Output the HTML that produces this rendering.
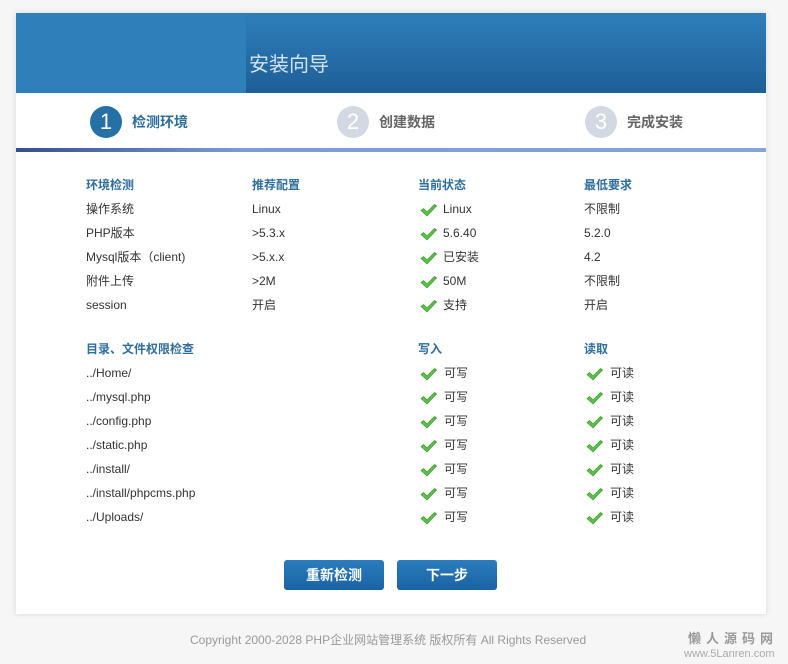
<!DOCTYPE html>
<html><head><meta charset="utf-8"><style>
*{margin:0;padding:0;box-sizing:border-box}
body{width:788px;height:664px;background:#f6f6f6;font-family:"Liberation Sans","Noto Sans CJK SC",sans-serif;position:relative;overflow:hidden}
.panel{position:absolute;left:16px;top:13px;width:750px;height:601px;background:#fff;box-shadow:0 0 6px rgba(0,0,0,.12)}
.hdr{position:absolute;left:0;top:0;width:750px;height:80px;background:linear-gradient(#2f7ebb,#1e5f97)}
.hdrl{position:absolute;left:0;top:0;width:230px;height:80px;background:#2f7fba}
.title{position:absolute;left:233px;top:35px;font-size:20px;color:#d4e4f2}
.step{position:absolute;top:94px;height:30px;display:flex;align-items:center}
.num{width:32px;height:32px;border-radius:50%;color:#fff;font-size:22px;text-align:center;line-height:32px;margin-right:10px}
.step span{font-size:14px;font-weight:bold}
.bar{position:absolute;left:0;top:135px;width:750px;height:4px;background:linear-gradient(90deg,#354f8e,#7d9ad8 30%,#86a3dc)}
.t{position:absolute;font-size:12px;color:#333;line-height:14px}
.h{color:#2e6e9e;font-weight:bold}
.ck{position:absolute;width:17px;height:14px}
.btn{position:absolute;top:547px;width:100px;height:30px;border-radius:3px;background:linear-gradient(#2a7dbd,#1a62a3);color:#fff;font-size:14px;font-weight:bold;text-align:center;line-height:30px}
.foot{position:absolute;left:190px;top:631px;font-size:12px;color:#999}
</style></head><body>
<div class="panel">
<div class="hdr"></div><div class="hdrl"></div>
<div class="title">安装向导</div>
<div class="step" style="left:74px"><div class="num" style="background:#2570a6">1</div><span style="color:#2a6c9c">检测环境</span></div>
<div class="step" style="left:321px"><div class="num" style="background:#d3d9e2">2</div><span style="color:#666">创建数据</span></div>
<div class="step" style="left:569px"><div class="num" style="background:#d3d9e2">3</div><span style="color:#666">完成安装</span></div>
<div class="bar"></div>
<div class="btn" style="left:268px">重新检测</div>
<div class="btn" style="left:381px">下一步</div>
</div>
<div class="foot">Copyright 2000-2028 PHP企业网站管理系统 版权所有 All Rights Reserved</div>
<div style="position:absolute;left:688px;top:628px;font-size:13px;color:#999;font-weight:bold;letter-spacing:5px">懒人源码网</div>
<div style="position:absolute;left:684px;top:648px;font-size:11px;color:#aaa">www.5Lanren.com</div>

<div class="t h" style="left:86px;top:178px">环境检测</div>
<div class="t h" style="left:252px;top:178px">推荐配置</div>
<div class="t h" style="left:418px;top:178px">当前状态</div>
<div class="t h" style="left:584px;top:178px">最低要求</div>

<div class="t" style="left:86px;top:202px">操作系统</div><div class="t" style="left:252px;top:202px">Linux</div><div class="t" style="left:443px;top:202px">Linux</div><div class="t" style="left:584px;top:202px">不限制</div>
<div class="t" style="left:86px;top:226px">PHP版本</div><div class="t" style="left:252px;top:226px">&gt;5.3.x</div><div class="t" style="left:443px;top:226px">5.6.40</div><div class="t" style="left:584px;top:226px">5.2.0</div>
<div class="t" style="left:86px;top:250px">Mysql版本（client)</div><div class="t" style="left:252px;top:250px">&gt;5.x.x</div><div class="t" style="left:443px;top:250px">已安装</div><div class="t" style="left:584px;top:250px">4.2</div>
<div class="t" style="left:86px;top:274px">附件上传</div><div class="t" style="left:252px;top:274px">&gt;2M</div><div class="t" style="left:443px;top:274px">50M</div><div class="t" style="left:584px;top:274px">不限制</div>
<div class="t" style="left:86px;top:298px">session</div><div class="t" style="left:252px;top:298px">开启</div><div class="t" style="left:443px;top:298px">支持</div><div class="t" style="left:584px;top:298px">开启</div>

<div class="t h" style="left:86px;top:342px">目录、文件权限检查</div>
<div class="t h" style="left:418px;top:342px">写入</div>
<div class="t h" style="left:584px;top:342px">读取</div>

<div class="t" style="left:86px;top:366px">../Home/</div>
<div class="t" style="left:86px;top:390px">../mysql.php</div>
<div class="t" style="left:86px;top:414px">../config.php</div>
<div class="t" style="left:86px;top:438px">../static.php</div>
<div class="t" style="left:86px;top:462px">../install/</div>
<div class="t" style="left:86px;top:486px">../install/phpcms.php</div>
<div class="t" style="left:86px;top:510px">../Uploads/</div>

<svg width="0" height="0" style="position:absolute"><defs><symbol id="c" viewBox="0 0 17 14"><path d="M1 7.5 L3.5 5.5 L7 9 L14.5 1.5 L16.5 3 L7 12.8 Z" fill="#5cc34a" stroke="#3f9a33" stroke-width="0.8" stroke-linejoin="round"/></symbol></defs></svg>
<script>
var ys=[203,227,251,275,299];
ys.forEach(function(y){document.write('<svg class="ck" style="left:420px;top:'+y+'px"><use href="#c"/></svg>')});
for(var i=0;i<7;i++){var y=367+24*i;
document.write('<svg class="ck" style="left:420px;top:'+y+'px"><use href="#c"/></svg><div class="t" style="left:444px;top:'+(y-1)+'px">可写</div>');
document.write('<svg class="ck" style="left:586px;top:'+y+'px"><use href="#c"/></svg><div class="t" style="left:610px;top:'+(y-1)+'px">可读</div>');}
</script>
</body></html>
